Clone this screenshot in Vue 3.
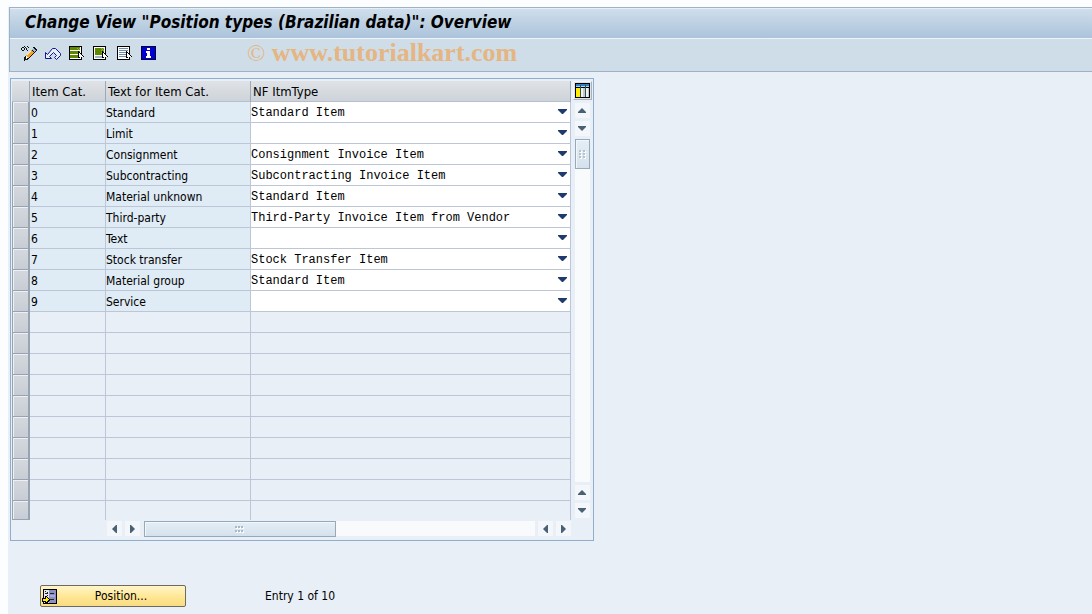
<script setup>
import { ref } from 'vue'

const rows = ref([
  { cat: '0', text: 'Standard', type: 'Standard Item' },
  { cat: '1', text: 'Limit', type: '' },
  { cat: '2', text: 'Consignment', type: 'Consignment Invoice Item' },
  { cat: '3', text: 'Subcontracting', type: 'Subcontracting Invoice Item' },
  { cat: '4', text: 'Material unknown', type: 'Standard Item' },
  { cat: '5', text: 'Third-party', type: 'Third-Party Invoice Item from Vendor' },
  { cat: '6', text: 'Text', type: '' },
  { cat: '7', text: 'Stock transfer', type: 'Stock Transfer Item' },
  { cat: '8', text: 'Material group', type: 'Standard Item' },
  { cat: '9', text: 'Service', type: '' }
])

const types = [
  '',
  'Standard Item',
  'Consignment Invoice Item',
  'Subcontracting Invoice Item',
  'Third-Party Invoice Item from Vendor',
  'Stock Transfer Item'
]
</script>

<template>
  <main class="window">
    <header class="head">
      <h1>Change View "Position types (Brazilian data)": Overview</h1>
      <nav class="toolbar" aria-label="Application toolbar">
        <button class="tool" type="button" aria-label="Display / Change">
          <svg width="16" height="16" viewBox="0 0 16 16" shape-rendering="crispEdges">
            <path d="M0 3h1v2h-1zM1 2h2v1h-2zM1 5h2v1h-2zM3 3h1v2h-1zM4 2h1v1h-1zM5 3h1v2h-1zM6 5h1v1h-1zM7 2h1v1h-1zM3 1h1v1h-1zM6 1h1v1h-1z" fill="#111" />
            <path d="M12 2h2v1h1v1h1v2h-1v1h-1v1h-1v1h-1v1h-1v1h-1v1h-1v1h-1v1h-1v1h-3v1h-1v-4h1v-1h1v-1h1v-1h1v-1h1v-1h1v-1h1v-1h1v-1h1z" fill="#111" />
            <path d="M12 3h1v1h1v1h1v1h-1v1h-1v-1h-1v-1h-1v-1h1z" fill="#9fb9dc" />
            <path d="M10 5h1v1h1v1h1v1h-1v1h-1v1h-1v1h-1v1h-1v1h-1v-1h-1v-1h-1v-1h1v-1h1v-1h1v-1h1v-1h1z" fill="#f5a126" />
            <path d="M9 6h1v1h-1v1h-1v1h-1v1h-1v-1h1v-1h1v-1h1z" fill="#fff3b0" />
            <path d="M5 11h1v1h1v1h-1v1h-1z" fill="#fff" />
          </svg>
        </button>
        <button class="tool" type="button" aria-label="Undo">
          <svg width="16" height="16" viewBox="0 0 16 16">
            <path d="M.5 7.500V13.500H6.500L4.500 11.500L8.500 7.500L11.500 10.500L9.500 12.500L11.500 14.500L15.500 10.500V8.500L10.500 3.500H7.500L2.500 9.500Z" fill="#e6eff8" stroke="#15158c" />
          </svg>
        </button>
        <button class="tool" type="button" aria-label="Select all">
          <svg width="16" height="16" viewBox="0 0 16 16" shape-rendering="crispEdges">
            <path d="M0 1h13v14h-13z" fill="#000" />
            <path d="M1 2h11v12h-11z" fill="#fff" />
            <path d="M1 2h10v3h-10zM1 6h10v3h-10zM1 10h10v3h-10z" fill="#5d8700" />
            <path d="M8 3h1v1h-1zM10 3h1v1h-1zM9 4h1v1h-1zM9 7h1v1h-1z" fill="#91ad4c" />
            <path d="M9 6h1v1h1v1h1v1h1v1h1v1h1v1h-2v2h-2v-1h-2z" fill="#000" />
            <path d="M10 8h1v1h1v1h1v1h1v1h-2v2h-1v-2h-1z" fill="#fff" />
          </svg>
        </button>
        <button class="tool" type="button" aria-label="Select block">
          <svg width="16" height="16" viewBox="0 0 16 16" shape-rendering="crispEdges">
            <path d="M0 1h13v14h-13z" fill="#000" />
            <path d="M1 2h11v12h-11z" fill="#fff" />
            <path d="M2 3h9v7h-9z" fill="#5d8700" />
            <path d="M8 3h1v1h-1zM10 3h1v1h-1zM9 4h1v1h-1zM8 5h1v1h-1zM10 5h1v1h-1zM9 6h1v1h-1zM8 7h1v1h-1z" fill="#91ad4c" />
            <path d="M2 11h8v2h-8z" fill="#9eb2c8" />
            <path d="M9 6h1v1h1v1h1v1h1v1h1v1h1v1h-2v2h-2v-1h-2z" fill="#000" />
            <path d="M10 8h1v1h1v1h1v1h1v1h-2v2h-1v-2h-1z" fill="#fff" />
          </svg>
        </button>
        <button class="tool" type="button" aria-label="Deselect all">
          <svg width="16" height="16" viewBox="0 0 16 16" shape-rendering="crispEdges">
            <path d="M0 1h13v14h-13z" fill="#000" />
            <path d="M1 2h11v12h-11z" fill="#fff" />
            <path d="M2 3h9v1h-9zM2 5h9v1h-9zM2 7h9v1h-9zM2 9h9v1h-9zM2 11h9v1h-9z" fill="#6f8ba5" />
            <path d="M9 6h1v1h1v1h1v1h1v1h1v1h1v1h-2v2h-2v-1h-2z" fill="#000" />
            <path d="M10 8h1v1h1v1h1v1h1v1h-2v2h-1v-2h-1z" fill="#fff" />
          </svg>
        </button>
        <button class="tool" type="button" aria-label="Information">
          <svg width="15" height="16" viewBox="0 0 15 16" shape-rendering="crispEdges">
            <path d="M0 1h15v14h-15z" fill="#00003c" />
            <path d="M1 2h13v12h-13z" fill="#0000d0" />
            <path d="M6 3h3v2h-3zM5 6h4v5h1v2h-5v-2h1v-3h-1z" fill="#fff" />
          </svg>
        </button>
        <span class="watermark"><span class="copy">©</span> www.tutorialkart.com</span>
      </nav>
    </header>

    <section class="panel" aria-label="Position types">
      <div class="columns">
        <table>
          <colgroup>
            <col class="c-sel" /><col class="c-cat" /><col class="c-text" /><col class="c-type" />
          </colgroup>
          <thead>
            <tr>
              <th class="corner"></th>
              <th scope="col">Item Cat.</th>
              <th scope="col">Text for Item Cat.</th>
              <th scope="col">NF ItmType</th>
            </tr>
          </thead>
          <tbody>
            <tr v-for="row in rows" :key="row.cat" class="filled">
              <td class="sel"><button type="button" :aria-label="'Select row ' + row.cat"></button></td>
              <td>{{ row.cat }}</td>
              <td class="text">{{ row.text }}</td>
              <td class="type">
                <div class="combo">
                  <select v-model="row.type" :aria-label="'NF item type for ' + row.text">
                    <option v-for="t in types" :key="t" :value="t">{{ t }}</option>
                  </select>
                  <svg width="9" height="6" viewBox="0 0 9 6"><path d="M0 0H9V1L5 5H4L0 1Z" fill="#1f3a6e" /></svg>
                </div>
              </td>
            </tr>
            <tr v-for="n in 10" :key="'empty' + n">
              <td class="sel"><button type="button" :aria-label="'Select empty row ' + n"></button></td>
              <td></td>
              <td></td>
              <td></td>
            </tr>
          </tbody>
        </table>
        <div class="vscroll">
          <button class="config" type="button" aria-label="Table settings">
            <svg width="15" height="15" viewBox="0 0 15 15" shape-rendering="crispEdges">
              <path d="M0 0h15v15h-15z" fill="#000" />
              <path d="M1 1h13v3h-13z" fill="#2d7fc8" />
              <path d="M1 3h13v1h-13z" fill="#a9d4f2" />
              <path d="M1 5h4v9h-4z" fill="#ffec00" />
              <path d="M6 5h4v9h-4zM11 5h3v9h-3z" fill="#f1f3f0" />
              <path d="M5 2h1v12h-1zM10 2h1v12h-1z" fill="#3c4a52" />
              <path d="M8 5h2v9h-2zM13 5h1v9h-1z" fill="#c5cbc9" />
            </svg>
          </button>
          <button class="arrow" type="button" aria-label="Scroll up"><svg width="8" height="5" viewBox="0 0 8 5"><path d="M4 0L8 4V5H0V4Z" /></svg></button>
          <button class="arrow" type="button" aria-label="Scroll down"><svg width="8" height="5" viewBox="0 0 8 5"><path d="M0 0H8V1L4 5L0 1Z" /></svg></button>
          <div class="track">
            <div class="thumb">
              <svg width="7" height="9" viewBox="0 0 7 9" shape-rendering="crispEdges">
                <path d="M1 1h2v2h-2zM5 1h2v2h-2zM1 4h2v2h-2zM5 4h2v2h-2zM1 7h2v2h-2zM5 7h2v2h-2z" fill="#fff" />
                <path d="M0 0h2v2h-2zM4 0h2v2h-2zM0 3h2v2h-2zM4 3h2v2h-2zM0 6h2v2h-2zM4 6h2v2h-2z" fill="#b4c3d1" />
              </svg>
            </div>
          </div>
          <button class="arrow" type="button" aria-label="Page up"><svg width="8" height="5" viewBox="0 0 8 5"><path d="M4 0L8 4V5H0V4Z" /></svg></button>
          <button class="arrow" type="button" aria-label="Page down"><svg width="8" height="5" viewBox="0 0 8 5"><path d="M0 0H8V1L4 5L0 1Z" /></svg></button>
        </div>
      </div>
      <div class="hscroll">
        <button class="arrow" type="button" aria-label="Scroll left"><svg width="5" height="8" viewBox="0 0 5 8"><path d="M5 0V8H4L0 4L4 0Z" /></svg></button>
        <button class="arrow" type="button" aria-label="Scroll right"><svg width="5" height="8" viewBox="0 0 5 8"><path d="M0 0H1L5 4L1 8H0Z" /></svg></button>
        <div class="track">
          <div class="thumb">
            <svg width="9" height="7" viewBox="0 0 9 7" shape-rendering="crispEdges">
              <path d="M1 1h2v2h-2zM4 1h2v2h-2zM7 1h2v2h-2zM1 5h2v2h-2zM4 5h2v2h-2zM7 5h2v2h-2z" fill="#fff" />
              <path d="M0 0h2v2h-2zM3 0h2v2h-2zM6 0h2v2h-2zM0 4h2v2h-2zM3 4h2v2h-2zM6 4h2v2h-2z" fill="#a9b8c7" />
            </svg>
          </div>
        </div>
        <button class="arrow" type="button" aria-label="Page left"><svg width="5" height="8" viewBox="0 0 5 8"><path d="M5 0V8H4L0 4L4 0Z" /></svg></button>
        <button class="arrow" type="button" aria-label="Page right"><svg width="5" height="8" viewBox="0 0 5 8"><path d="M0 0H1L5 4L1 8H0Z" /></svg></button>
      </div>
    </section>

    <footer>
      <button class="position" type="button">
        <svg width="15" height="15" viewBox="0 0 15 15" shape-rendering="crispEdges">
          <path d="M1 0h14v15h-14z" fill="#000" />
          <path d="M2 1h5v13h-5z" fill="#e4e8ef" />
          <path d="M7 1h7v13h-7z" fill="#8d90c4" />
          <path d="M3 2h1v1h-1zM5 3h1v1h-1zM3 4h3v1h-3zM8 4h4v1h-4zM8 10h4v1h-4zM5 6h1v1h-1z" fill="#222" />
          <path d="M8 6h5v2h-5z" fill="#a9acd8" />
          <path d="M0 9h3v-2h2v1h1v1h1v1h1v2h-1v1h-1v1h-1v1h-2v-2h-3z" fill="#000" />
          <path d="M1 10h3v-2h1v1h1v1h1v1h-1v1h-1v1h-1v-1h-3z" fill="#ffec00" />
        </svg>
        <span>Position...</span>
      </button>
      <span>Entry 1 of 10</span>
    </footer>
  </main>
</template>

<style>
body {
  background: #fcfdfe;
}
</style>

<style scoped>
.window {
  box-sizing: border-box;
  min-height: calc(100vh - 7px);
  margin: 7px 0 0 8px;
  padding-left: 1px;
  background: #e8eff6;
  color: #000;
  font: 12px/18px "DejaVu Sans Condensed", "Noto Sans", sans-serif;
}
button {
  display: flex;
  align-items: center;
  justify-content: center;
  margin: 0;
  padding: 0;
  border: 0;
  background: none;
  color: inherit;
  font: inherit;
}
svg {
  display: block;
  flex: none;
}
.head {
  border: 1px solid #9fb2c5;
  border-right: 0;
}
h1 {
  margin: 0;
  padding: 0 15px 3px;
  border-top: 1px solid #e6eff7;
  border-bottom: 1px solid #eef4f9;
  background: linear-gradient(#cfdeeb, #abc3db);
  font-size: 17px;
  font-weight: bold;
  font-style: italic;
  line-height: 26px;
}
.toolbar {
  box-sizing: border-box;
  display: flex;
  align-items: center;
  gap: 8px;
  height: 32px;
  padding: 0 0 4px 11px;
  background: #cfdde8;
}
.watermark {
  margin-left: 83px;
  color: #e5b582;
  font: bold 26px/26px "Liberation Serif", serif;
  white-space: nowrap;
}
.copy {
  font-size: 24px;
  font-weight: normal;
}
.panel {
  width: fit-content;
  margin: 6px 0 0 1px;
  padding: 2px 2px 4px 1px;
  border: 1px solid #8eaecb;
}
.columns {
  display: flex;
  gap: 2px;
}
table {
  width: 559px;
  border-collapse: separate;
  border-spacing: 0;
  table-layout: fixed;
}
.c-sel { width: 18px; }
.c-cat { width: 76px; }
.c-text { width: 145px; }
.c-type { width: 320px; }
th {
  box-sizing: border-box;
  height: 21px;
  padding: 2px 0 0 2px;
  border-right: 1px solid #9ea9b6;
  border-bottom: 1px solid #b6c0cd;
  background: linear-gradient(#dfe3e7, #ced3d9);
  font-size: 13px;
  font-weight: normal;
  text-align: left;
  white-space: nowrap;
}
td {
  box-sizing: border-box;
  height: 21px;
  padding: 2px 0 0 1px;
  border-right: 1px solid #bcc6d6;
  border-bottom: 1px solid #bcc6d6;
  white-space: nowrap;
}
td.text {
  padding-left: 0;
}
.filled td {
  background: #dfebf5;
}
.filled .type {
  padding: 0;
  background: #fff;
}
tbody tr:last-child td {
  height: 18px;
  border-bottom: 0;
}
td.sel {
  padding: 0;
  border: 0;
}
.sel button {
  box-sizing: border-box;
  width: 18px;
  height: 21px;
  border: 1px solid #98a3b1;
  border-top: 0;
  border-right-width: 2px;
  background: linear-gradient(#d4d8de, #c8cdd5);
  box-shadow: inset 1px 1px #eef0f3;
}
tbody tr:last-child .sel button {
  height: 19px;
}
.combo {
  display: flex;
  align-items: center;
  padding-right: 3px;
}
select {
  box-sizing: border-box;
  flex: 1;
  min-width: 0;
  height: 20px;
  margin: 0;
  padding: 2px 0 0;
  border: 0;
  background: transparent;
  color: #000;
  appearance: none;
  font: 12px/18px "Liberation Mono", monospace;
}
.vscroll {
  display: flex;
  flex-direction: column;
  align-items: center;
  gap: 3px;
  width: 18px;
  padding-bottom: 2px;
}
.config {
  box-sizing: border-box;
  width: 19px;
  height: 19px;
  border: 1px solid #a8b1bc;
  border-top-color: #f4f6f8;
  border-left-color: #f4f6f8;
  background: #dfe3e7;
}
.arrow {
  width: 15px;
  height: 15px;
  flex: none;
  background: #f3f7fb;
}
.arrow path {
  fill: #4a6173;
}
.track {
  flex: 1;
  background: #f9fafb;
}
.vscroll .track {
  width: 15px;
}
.thumb {
  box-sizing: border-box;
  display: flex;
  align-items: center;
  justify-content: center;
  border: 1px solid #96a9bb;
  background: linear-gradient(#e5eef6, #d4e1ec);
  box-shadow: inset 1px 1px #f2f7fb;
}
.vscroll .thumb {
  height: 30px;
}
.hscroll {
  display: flex;
  gap: 3px;
  margin: 1px 20px 0 95px;
}
.hscroll .thumb {
  width: 49%;
  height: 16px;
}
.hscroll .track {
  height: 15px;
  margin-left: 1px;
}
footer {
  display: flex;
  align-items: center;
  gap: 79px;
  padding: 44px 0 7px 31px;
}
.position {
  box-sizing: border-box;
  width: 146px;
  height: 22px;
  padding-left: 1px;
  border: 1px solid #6e6a62;
  border-radius: 2px;
  background: linear-gradient(#fff6c8, #ffe58f 60%, #f8dc83);
}
.position span {
  flex: 1;
  text-align: center;
}
</style>
